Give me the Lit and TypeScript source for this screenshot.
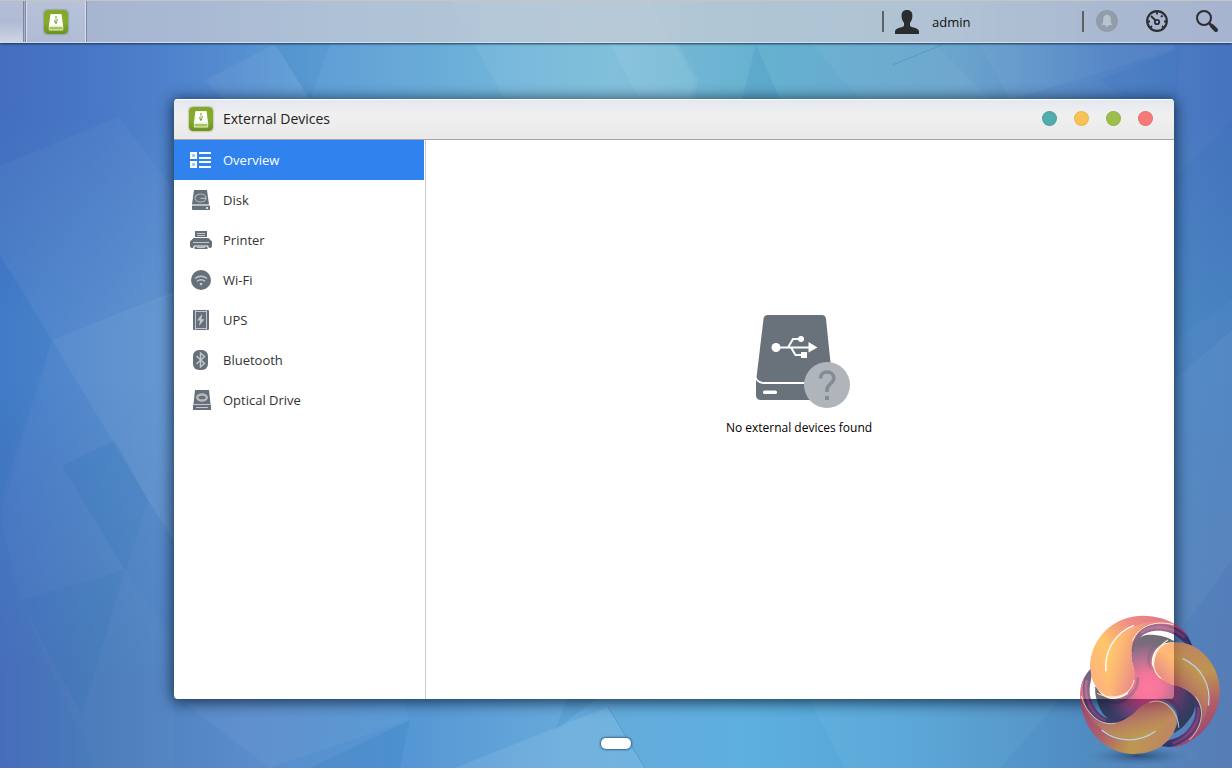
import { LitElement, html, svg, css } from "lit";
import { customElement, state } from "lit/decorators.js";

interface Section {
  id: string;
  label: string;
  icon: unknown;
}

const driveGlyph = svg`
  <rect x="0" y="0" width="24" height="24" rx="4" fill="url(#leaf)"></rect>
  <path d="M6.4 4h11.2l1.6 12v3.4a1 1 0 0 1-1 1H5.8a1 1 0 0 1-1-1V16z" fill="#e9f3cf"></path>
  <path d="M6.8 4.4h10.4l1.3 11.2h-13z" fill="#ffffff"></path>
  <path d="M5.6 17h12.8v2.4H5.6z" fill="#a5c45a"></path>
  <path d="M12 6.500v6M10.500 10v1.500l1.500 1M13.500 9v1.500l-1.500 1" stroke="#8fb144" stroke-width=".9" fill="none"></path>
  <circle cx="12" cy="12.600" r="1.200" fill="#7fa52c"></circle>
  <circle cx="12" cy="6.800" r=".8" fill="#8fb144"></circle>`;

const appIcon = html`<svg class="app-icon" viewBox="0 0 24 24" aria-hidden="true">
  <defs>
    <linearGradient id="leaf" x1="0" y1="0" x2="0" y2="1">
      <stop offset="0" stop-color="#84a62a"></stop>
      <stop offset=".5" stop-color="#86ab2c"></stop>
      <stop offset="1" stop-color="#6d9122"></stop>
    </linearGradient>
  </defs>
  ${driveGlyph}
</svg>`;

const SECTIONS: Section[] = [
  {
    id: "overview",
    label: "Overview",
    icon: svg`
      <path d="M2 4h5v5H2zM2 13h5v5H2z" fill="#a9ccfb" stroke="#fff" stroke-width="2"></path>
      <path d="M10 4h12M10 9h12M10 13h12M10 18h12" stroke="#fff" stroke-width="2"></path>`,
  },
  {
    id: "disk",
    label: "Disk",
    icon: svg`
      <path d="M5 1h13l2 14.500H3z" fill="#66707a"></path>
      <path d="M3 16.500h18V20a1 1 0 0 1-1 1H4a1 1 0 0 1-1-1z" fill="#66707a"></path>
      <path d="M3 16h17.500" stroke="#c3c7cb"></path>
      <ellipse cx="11.500" cy="9" rx="5.500" ry="4" fill="none" stroke="#b4b9be" stroke-width="1.200"></ellipse>
      <path d="M11.500 9.300h5.500" stroke="#b4b9be" stroke-width="1.300"></path>
      <path d="M17 18h2v2h-2z" fill="#d5d8da"></path>`,
  },
  {
    id: "printer",
    label: "Printer",
    icon: svg`
      <path d="M6 2h12v6H6zM1 17v-4.500L4.500 9h15l3.500 3.500V17a2 2 0 0 1-2 2h-1l-1-2.500H5L4 19H3a2 2 0 0 1-2-2z" fill="#66707a"></path>
      <path d="M5.500 17.500h13V20h-13z" fill="#66707a"></path>
      <path d="M8 4.500h8M8 6.500h8M4 13.500h16" stroke="#c3c7cb"></path>
      <path d="M8 18.500h8" stroke="#c3c7cb"></path>`,
  },
  {
    id: "wifi",
    label: "Wi-Fi",
    icon: svg`
      <circle cx="12" cy="11" r="10" fill="#66707a"></circle>
      <path d="M6 9.500q6-4.500 12 0M8 12.200q4-3 8 0" stroke="#c3c7cb" stroke-width="1.500" fill="none"></path>
      <circle cx="12" cy="15" r="1.300" fill="#c3c7cb"></circle>`,
  },
  {
    id: "ups",
    label: "UPS",
    icon: svg`
      <rect x="4" y="1" width="16" height="20" rx="1" fill="#66707a"></rect>
      <path d="M6.500 1v20M17.500 1v20M6.500 2.500h11M6.500 19.500h11" stroke="#c3c7cb"></path>
      <path d="M13 5l-5 6.500h3L10 17l5.500-6.800H12.500z" fill="#c3c7cb"></path>`,
  },
  {
    id: "bluetooth",
    label: "Bluetooth",
    icon: svg`
      <rect x="4" y="1" width="15" height="20" rx="6" fill="#66707a"></rect>
      <path d="M7.500 7l8 7.500-4 3.500V4l4 3.500-8 7.500" stroke="#c3c7cb" stroke-width="1.400" fill="none"></path>`,
  },
  {
    id: "optical",
    label: "Optical Drive",
    icon: svg`
      <path d="M6 1h14l1.500 14H4.500z" fill="#66707a"></path>
      <path d="M4 15h18v6H4z" fill="#66707a"></path>
      <path d="M4 15.500h18" stroke="#c3c7cb"></path>
      <path d="M7 18.500h12" stroke="#c3c7cb"></path>
      <ellipse cx="13" cy="8.500" rx="4.800" ry="3" fill="none" stroke="#b4b9be" stroke-width="2.400"></ellipse>`,
  },
];

const wallpaper = html`<svg class="wallpaper" viewBox="0 0 1232 768" preserveAspectRatio="none" aria-hidden="true">
  <defs>
    <linearGradient id="skyTop">
      <stop offset="0" stop-color="#446ebe"></stop>
      <stop offset=".08" stop-color="#4878c6"></stop>
      <stop offset=".15" stop-color="#5084cd"></stop>
      <stop offset=".25" stop-color="#5e9dd5"></stop>
      <stop offset=".4" stop-color="#6fb3d9"></stop>
      <stop offset=".5" stop-color="#7bbcd8"></stop>
      <stop offset=".62" stop-color="#66b1d0"></stop>
      <stop offset=".78" stop-color="#6aa4cd"></stop>
      <stop offset=".9" stop-color="#5283c5"></stop>
      <stop offset="1" stop-color="#4773bf"></stop>
    </linearGradient>
    <linearGradient id="skyLow">
      <stop offset="0" stop-color="#466dba"></stop>
      <stop offset=".08" stop-color="#4a7cba"></stop>
      <stop offset=".2" stop-color="#5a8ccb"></stop>
      <stop offset=".33" stop-color="#5597d4"></stop>
      <stop offset=".46" stop-color="#66aadb"></stop>
      <stop offset=".6" stop-color="#5eb0df"></stop>
      <stop offset=".74" stop-color="#55a5d7"></stop>
      <stop offset=".88" stop-color="#508cc1"></stop>
      <stop offset="1" stop-color="#577cb6"></stop>
    </linearGradient>
    <linearGradient id="skyMid">
      <stop offset="0" stop-color="#457dc8"></stop>
      <stop offset=".13" stop-color="#5a90ce"></stop>
      <stop offset=".5" stop-color="#66a6d4"></stop>
      <stop offset="1" stop-color="#4c84c2"></stop>
    </linearGradient>
    <linearGradient id="fadeLow" x1="0" y1="0" x2="0" y2="1">
      <stop offset=".5" stop-color="#000"></stop>
      <stop offset=".88" stop-color="#fff"></stop>
    </linearGradient>
    <linearGradient id="fadeMid" x1="0" y1="0" x2="0" y2="1">
      <stop offset=".14" stop-color="#000"></stop>
      <stop offset=".42" stop-color="#fff"></stop>
    </linearGradient>
    <mask id="maskLow"><rect width="1232" height="768" fill="url(#fadeLow)"></rect></mask>
    <mask id="maskMid"><rect width="1232" height="768" fill="url(#fadeMid)"></rect></mask>
  </defs>
  <rect width="1232" height="768" fill="url(#skyTop)"></rect>
  <rect width="1232" height="768" fill="url(#skyMid)" mask="url(#maskMid)"></rect>
  <rect width="1232" height="768" fill="url(#skyLow)" mask="url(#maskLow)"></rect>
  <g fill="#fff">
    <path opacity=".03" d="M0 166L118 117 174 190V295L52 340 0 255z"></path>
    <path opacity=".07" d="M52 340L174 292V540L148 500z"></path>
    <path opacity=".02" d="M52 340L148 500 125 570 174 640V768H95L20 600 0 515z"></path>
    <path opacity=".05" d="M205 80L275 44 310 100H225z"></path>
    <path opacity=".06" d="M450 0L505 100H690L695 80 650 0z"></path>
    <path opacity=".06" d="M610 44L640 100H695L698 78 678 44z"></path>
    <path opacity=".04" d="M812 44L860 100H990L935 44z"></path>
    <path opacity=".04" d="M980 44L1010 100 1174 50V44z"></path>
    <path opacity=".09" d="M455 768L608 707 645 768z"></path>
    <path opacity=".04" d="M180 700L270 768 410 720 400 690z"></path>
    <path opacity=".04" d="M810 700L845 768H1000L1060 700z"></path>
    <path opacity=".04" d="M1174 380L1232 330V560L1174 640z"></path>
  </g>
  <g fill="#0a64a8">
    <path opacity=".06" d="M0 255L52 340 0 500z"></path>
    <path opacity=".1" d="M115 440L148 500 125 570 62 466z"></path>
    <path opacity=".08" d="M125 570L82 715 20 600z"></path>
    <path opacity=".08" d="M275 44L310 100 330 44z"></path>
    <path opacity=".1" d="M756 44L742 100H780z"></path>
    <path opacity=".1" d="M310 768L410 720 400 768z"></path>
    <path opacity=".1" d="M555 730L570 690H608z"></path>
    <path opacity=".07" d="M1100 80L1180 48 1174 130z"></path>
    <path opacity=".06" d="M1174 180L1232 120V300L1174 340z"></path>
  </g>
  <path d="M608 707L645 768M892 65L942 45" stroke="#2d7fb8" opacity=".35" fill="none"></path>
</svg>`;

const blade = (turn: number) => svg`<g transform="rotate(${turn} 264 261)">
  <path d="M212 150C214 104 250 70 306 66C352 68 384 96 397 138C384 134 372 128 366 122C340 98 320 92 290 92C250 94 228 116 218 160z" fill="url(#tail)"></path>
  <path d="M242 100C272 74 330 74 374 112" fill="none" stroke="#ff3d78" stroke-width="8" opacity=".35"></path>
  <path d="M156 293C112 286 84 232 91 182C102 104 168 46 250 47C310 48 362 72 386 112C352 76 300 60 256 80C224 98 208 140 216 184C232 226 226 290 156 293z" fill="url(#gold)"></path>
  <path d="M312 63C220 60 136 112 136 204C137 240 148 270 160 290C212 286 230 248 220 200C206 150 214 92 262 74z" fill="url(#goldIn)"></path>
  <path d="M222 76C164 98 132 154 138 214" fill="none" stroke="#fff" stroke-width="4"></path>
  <path d="M340 74C290 60 236 76 218 122M112 280C150 300 214 294 222 240" fill="none" stroke="#ffe9a0" stroke-width="3"></path>
</g>`;

const hubArm = (turn: number) => svg`<g transform="rotate(${turn} 264 261)">
  <path d="M264 261L200 300C232 260 222 220 215 185C209 140 225 108 265 104C300 104 330 112 344 126C302 124 272 150 276 196L322 268z" fill="url(#hub)"></path>
  <path d="M344 126C296 116 262 142 266 190C268 216 284 238 304 250" fill="none" stroke="#1c1428" stroke-width="9" opacity=".45"></path>
</g>`;

const emblem = html`<svg class="emblem" viewBox="0 0 516 504" aria-hidden="true">
  <defs>
    <linearGradient id="gold" gradientUnits="userSpaceOnUse" x1="130" y1="270" x2="370" y2="90">
      <stop offset="0" stop-color="#ff8a2c"></stop>
      <stop offset=".3" stop-color="#ffa210"></stop>
      <stop offset=".6" stop-color="#e84a38"></stop>
      <stop offset="1" stop-color="#c81c48"></stop>
    </linearGradient>
    <linearGradient id="goldIn" gradientUnits="userSpaceOnUse" x1="130" y1="180" x2="240" y2="210">
      <stop offset="0" stop-color="#ffb10c"></stop>
      <stop offset=".4" stop-color="#fb8a20"></stop>
      <stop offset="1" stop-color="#d93c48"></stop>
    </linearGradient>
    <linearGradient id="tail" gradientUnits="userSpaceOnUse" x1="215" y1="140" x2="397" y2="120">
      <stop offset="0" stop-color="#2a0a30"></stop>
      <stop offset=".5" stop-color="#6a1450"></stop>
      <stop offset="1" stop-color="#160030"></stop>
    </linearGradient>
    <radialGradient id="hub" gradientUnits="userSpaceOnUse" cx="262" cy="258" r="150">
      <stop offset="0" stop-color="#ff2664"></stop>
      <stop offset=".25" stop-color="#f0225e"></stop>
      <stop offset=".6" stop-color="#7c1c4c"></stop>
      <stop offset=".85" stop-color="#2c1030"></stop>
      <stop offset="1" stop-color="#1a1424"></stop>
    </radialGradient>
    <radialGradient id="floor">
      <stop offset="0" stop-color="#10243c" stop-opacity=".9"></stop>
      <stop offset=".5" stop-color="#2c4f78" stop-opacity=".4"></stop>
      <stop offset="1" stop-color="#6f9cc4" stop-opacity=".15"></stop>
    </radialGradient>
  </defs>
  <ellipse cx="235" cy="468" rx="170" ry="32" fill="url(#floor)"></ellipse>
  ${[0, 120, 240].map(hubArm)}
  ${[0, 120, 240].map(blade)}
</svg>`;

@customElement("app-root")
export class AppRoot extends LitElement {
  @state() private active = "overview";

  static styles = css`
    :host {
      display: block;
      font-family: "Open Sans", "Noto Sans", sans-serif;
      font-size: 13px;
      line-height: 20px;
      color: #333;
    }
    button {
      font: inherit;
      color: inherit;
      border: 0;
      padding: 0;
      margin: 0;
      background: none;
      cursor: pointer;
    }
    svg {
      display: block;
    }
    .desktop {
      position: relative;
      display: flex;
      flex-direction: column;
      height: calc(100vh - 2px);
      min-height: 480px;
      overflow: hidden;
      isolation: isolate;
      box-shadow: inset -2px 0 2px rgba(20, 50, 90, 0.4);
    }
    .wallpaper {
      position: absolute;
      inset: 0;
      z-index: -1;
      width: 100%;
      height: 100%;
    }
    .taskbar {
      display: flex;
      align-items: stretch;
      box-sizing: border-box;
      height: 43px;
      border-top: 1px solid #c3c5c6;
      border-bottom: 1px solid rgba(225, 232, 238, 0.8);
      background: rgba(204, 205, 213, 0.72);
      box-shadow: 0 1px 2px rgba(15, 45, 80, 0.9);
    }
    .launcher {
      width: 24px;
      border-right: 1px solid #7f8898;
      background: linear-gradient(rgba(255, 255, 255, 0.15), rgba(255, 255, 255, 0.1) 50%, rgba(255, 255, 255, 0.45));
    }
    .task {
      display: grid;
      place-items: center;
      width: 62px;
      margin-left: 1px;
      border-left: 1px solid #7f8898;
      border-right: 1px solid #7f8898;
      background: linear-gradient(rgba(255, 255, 255, 0.2), rgba(255, 255, 255, 0.1));
      box-shadow: inset 1px 0 rgba(255, 255, 255, 0.5), inset -1px 0 rgba(255, 255, 255, 0.5);
    }
    .app-icon {
      width: 24px;
      height: 24px;
      border-radius: 4px;
      box-shadow: 0 0 2px rgba(50, 80, 10, 0.7);
    }
    .tray {
      display: flex;
      align-items: center;
      margin-left: auto;
    }
    .user {
      display: flex;
      align-items: center;
      gap: 13px;
      width: 200px;
      height: 21px;
      padding-left: 11px;
      border-left: 2px solid #5d6066;
      box-sizing: border-box;
      color: #111;
    }
    .tools {
      display: flex;
      align-items: center;
      gap: 26px;
      height: 21px;
      padding: 0 13px 0 11px;
      border-left: 2px solid #5d6066;
    }
    .tools svg,
    .user svg {
      width: 24px;
      height: 24px;
    }
    .stage {
      display: flex;
      flex: 1;
      min-height: 0;
      padding: 56px 58px 0 174px;
    }
    .window {
      display: flex;
      flex-direction: column;
      flex: 1;
      min-width: 0;
      border-radius: 4px;
      overflow: hidden;
      background: #fff;
      box-shadow: 0 2px 14px 2px rgba(10, 30, 55, 0.75);
    }
    .titlebar {
      display: flex;
      align-items: center;
      gap: 10px;
      box-sizing: border-box;
      height: 41px;
      padding: 0 21px 0 15px;
      border-bottom: 1px solid #a3a5a8;
      background: linear-gradient(#e3e8ef, #f0f0f0 40%, #e9e9e9);
      box-shadow: inset 0 1px #fff;
    }
    .title {
      margin: 0;
      font-size: 14px;
      font-weight: 400;
      color: #222;
    }
    .controls {
      display: flex;
      gap: 17px;
      margin-left: auto;
      padding-bottom: 2px;
    }
    .dot {
      width: 15px;
      height: 15px;
      border-radius: 50%;
      box-shadow: inset 0 0 0 1px rgba(0, 0, 0, 0.06);
    }
    .teal {
      background: #51adab;
    }
    .amber {
      background: #f8c255;
    }
    .green {
      background: #9cbf4b;
    }
    .red {
      background: #f47a7a;
    }
    .body {
      display: flex;
      flex: 1;
      min-height: 0;
    }
    .sidebar {
      width: 250px;
      padding-right: 1px;
      border-right: 1px solid #c9cad1;
    }
    .item {
      display: flex;
      align-items: center;
      gap: 10px;
      width: 100%;
      height: 40px;
      padding-left: 15px;
      text-align: left;
    }
    .item.selected {
      background: #3082ee;
      color: #fff;
    }
    .item svg {
      width: 24px;
      height: 22px;
    }
    .content {
      display: flex;
      flex-direction: column;
      align-items: center;
      justify-content: center;
      gap: 10px;
      flex: 1;
      padding: 0 2px 86px 0;
    }
    .empty-art {
      width: 94px;
      height: 93px;
      margin-left: 8px;
    }
    .message {
      margin: 0;
      font-size: 12px;
      color: #000;
    }
    .pages {
      display: flex;
      justify-content: center;
      height: 30px;
      padding-top: 39px;
    }
    .page {
      width: 30px;
      height: 11px;
      border-radius: 5px;
      background: #fff;
      box-shadow: 0 0 2px 1px rgba(30, 70, 110, 0.7);
    }
    .emblem {
      position: absolute;
      right: 0;
      bottom: 0;
      width: 172px;
      height: 168px;
      opacity: 0.62;
      pointer-events: none;
    }
  `;

  private renderTray() {
    return html`<div class="tray">
      <button class="user">
        <svg viewBox="0 0 24 24" aria-hidden="true">
          <path
            d="M12 0c4 0 5.600 2.500 5.400 6-.1 3.500-1 5-2.400 6.800v3c1 2 9 1.700 9 5.700V24H0v-2.500c0-4 8-3.700 9-5.700v-3C7.600 11 6.700 9.500 6.600 6 6.400 2.500 8 0 12 0z"
            fill="#2a2c2f"
          ></path>
        </svg>
        <span>admin</span>
      </button>
      <div class="tools">
        <button aria-label="Notifications">
          <svg viewBox="0 0 24 24">
            <circle cx="12" cy="11" r="11" fill="#929dac"></circle>
            <path d="M12 4.500c3 .6 3.800 2.500 3.800 5 0 3 .5 4.200 1.700 5.500h-11c1.200-1.300 1.700-2.500 1.700-5.500 0-2.500.8-4.400 3.800-5z" fill="#b7c4d2"></path>
            <path d="M10.500 15h3v1.500h-3z" fill="#b7c4d2"></path>
          </svg>
        </button>
        <button aria-label="Activity">
          <svg viewBox="0 0 24 24" fill="none" stroke="#2b2d31">
            <circle cx="12" cy="11" r="9.800" stroke-width="2.200"></circle>
            <circle cx="12" cy="12" r="2.200" stroke-width="1.800"></circle>
            <path d="M6 6l4.500 4.500M12 2v2.500M2.500 11.500H5M19 11.500h2.500M17.500 5.500L16 7M5.500 17.500L7 16M18.500 17.500L17 16" stroke-width="1.800"></path>
          </svg>
        </button>
        <button aria-label="Search">
          <svg viewBox="0 0 24 24" fill="none" stroke="#2b2d31">
            <circle cx="9" cy="8" r="7" stroke-width="2"></circle>
            <path d="M14 13l3 3" stroke-width="2.600"></path>
            <path d="M17 16l4 4" stroke-width="4" stroke-linecap="round"></path>
          </svg>
        </button>
      </div>
    </div>`;
  }

  private renderEmpty() {
    return html`<section class="content">
      <svg class="empty-art" viewBox="0 0 94 93" aria-hidden="true">
        <path d="M12 0h53.500a4.500 4.500 0 0 1 4.500 4l6.500 63H6.500Q2 66 .5 62.500L7.500 4A4.500 4.500 0 0 1 12 0z" fill="#69717b"></path>
        <path d="M0 65q3 4 8 4h68v16H4.500A4.500 4.500 0 0 1 0 80.500z" fill="#69717b"></path>
        <rect x="7" y="75.500" width="14" height="3.500" rx="1.500" fill="#fff"></rect>
        <g fill="none" stroke="#fff" stroke-width="2">
          <path d="M20 32.500h34M32 32.500l5-8.500h8M35 32.500l4.500 7.500h8"></path>
        </g>
        <circle cx="20" cy="32.500" r="4.500" fill="#fff"></circle>
        <circle cx="45" cy="24" r="3" fill="#fff"></circle>
        <path d="M45 37h6v6h-6zM52.500 27l9 5.500-9 5z" fill="#fff"></path>
        <circle cx="71" cy="70" r="23" fill="#afb5ba"></circle>
        <path d="M64.500 63.500c0-4 2.500-6.500 6.500-6.500s6.800 2.200 6.800 6c0 5.500-6.800 6-6.800 11.500v2.500" fill="none" stroke="#848c95" stroke-width="3.600"></path>
        <path d="M69 81h4v4h-4z" fill="#848c95"></path>
      </svg>
      <p class="message">No external devices found</p>
    </section>`;
  }

  render() {
    return html`<div class="desktop">
      ${wallpaper}
      <header class="taskbar">
        <button class="launcher" aria-label="Show desktop"></button>
        <button class="task" aria-label="External Devices">${appIcon}</button>
        ${this.renderTray()}
      </header>
      <main class="stage">
        <article class="window">
          <header class="titlebar">
            ${appIcon}
            <h1 class="title">External Devices</h1>
            <div class="controls">
              <button class="dot teal" aria-label="Help"></button>
              <button class="dot amber" aria-label="Minimize"></button>
              <button class="dot green" aria-label="Maximize"></button>
              <button class="dot red" aria-label="Close"></button>
            </div>
          </header>
          <div class="body">
            <nav class="sidebar">
              ${SECTIONS.map(
                (s) => html`<button
                  class="item ${s.id === this.active ? "selected" : ""}"
                  @click=${() => (this.active = s.id)}
                >
                  <svg viewBox="0 0 24 22" aria-hidden="true">${s.icon}</svg>
                  <span>${s.label}</span>
                </button>`,
              )}
            </nav>
            ${this.renderEmpty()}
          </div>
        </article>
      </main>
      <footer class="pages"><button class="page" aria-label="Page 1"></button></footer>
      ${emblem}
    </div>`;
  }
}
